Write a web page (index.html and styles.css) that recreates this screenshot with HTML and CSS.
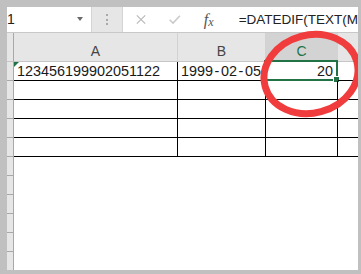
FILE: index.html
```html
<!DOCTYPE html>
<html lang="en">
<head>
    <meta charset="UTF-8">
    <meta name="viewport" content="width=device-width, initial-scale=1.0">
    <title>Sheet</title>
    <link rel="stylesheet" href="styles.css">
</head>
<body>
    <div class="win">
      <div class="fbar">
        <div class="namebox"><span class="name">1</span><span class="caret"></span></div>
        <div class="grip"><i></i><i></i><i></i></div>
        <div class="fbox">
          <svg class="cancel" width="12" height="11" viewBox="0 0 12 11"><path d="M1 0.5 L11 10.5 M11 0.5 L1 10.5" stroke="#b9b9b9" stroke-width="1.4" fill="none"/></svg>
          <svg class="enter" width="14" height="11" viewBox="0 0 14 11"><path d="M0.8 5.8 L4.8 9.8 L13 1" stroke="#c9c9c9" stroke-width="1.8" fill="none"/></svg>
          <span class="fx">f<span class="sub">x</span></span>
          <span class="formula">=DATEDIF(TEXT(M</span>
        </div>
      </div>

      <div class="sheet">
        <!-- column headers -->
        <div class="hd corner"></div>
        <div class="hd">A</div>
        <div class="hd">B</div>
        <div class="hd sel">C</div>
        <div class="hd last"></div>

        <!-- row 1 -->
        <div class="rh"></div>
        <div class="c txt"><span class="err"></span>123456199902051122</div>
        <div class="c num">1999<span class="dash">-</span>02<span class="dash">-</span>05</div>
        <div class="c num active">20<span class="box"><span class="handle"></span></span></div>
        <div class="c end"></div>

        <!-- rows 2-5 -->
        <div class="rh"></div><div class="c"></div><div class="c"></div><div class="c"></div><div class="c end"></div>
        <div class="rh"></div><div class="c"></div><div class="c"></div><div class="c"></div><div class="c end"></div>
        <div class="rh"></div><div class="c"></div><div class="c"></div><div class="c"></div><div class="c end"></div>
        <div class="rh"></div><div class="c"></div><div class="c"></div><div class="c"></div><div class="c end"></div>

        <!-- empty rows, no borders -->
        <div class="rh"></div><div class="blank"></div>
        <div class="rh"></div><div class="blank"></div>
        <div class="rh"></div><div class="blank"></div>
        <div class="rh"></div><div class="blank"></div>
        <div class="rh"></div><div class="blank"></div>
        <div class="rh bottom"></div><div class="blank"></div>
      </div>

      <svg class="ring" width="351" height="263" viewBox="0 0 351 263">
        <ellipse cx="304" cy="67" rx="47.5" ry="39" transform="rotate(-15 304 67)" fill="none" stroke="#f03c3c" stroke-width="7"/>
      </svg>
    </div>
</body>
</html>
```

FILE: styles.css
```css
body{
    margin:0;
    background:#c0c0c0;
    font-family:"Liberation Sans", Arial, sans-serif;
}
.win{
    position:relative;
    width:351px;
    height:263px;
    margin:7px 0 0 7px;
    background:white;
    overflow:hidden;
}

/* formula bar */
.fbar{
    display:flex;
    height:25px;
    background:#e6e6e6;
    border-bottom:1px solid #c8c8c8;
}
.namebox{
    position:relative;
    width:84px;
    background:white;
    border-right:1px solid #d4d4d4;
    font-size:14px;
    line-height:25px;
    color:#222;
}
.caret{
    position:absolute;
    left:70px;
    top:10px;
    border-left:3px solid transparent;
    border-right:3px solid transparent;
    border-top:4px solid #6a6a6a;
}
.grip{
    width:30px;
    display:flex;
    flex-direction:column;
    align-items:center;
    justify-content:center;
    gap:2.5px;
}
.grip i{
    width:2px;
    height:2px;
    background:#a9a9a9;
}
.fbox{
    flex:1;
    display:flex;
    align-items:center;
    background:white;
    border-left:1px solid #d4d4d4;
    white-space:nowrap;
    overflow:hidden;
}
.cancel{ margin-left:13px; }
.enter{ margin-left:23px; }
.fx{
    margin-left:23px;
    font-family:"Liberation Serif", serif;
    font-style:italic;
    font-size:16px;
    color:#555;
}
.fx .sub{
    font-size:12px;
    position:relative;
    top:1px;
}
.formula{
    margin-left:25px;
    font-size:13.5px;
    color:#222;
}

/* grid */
.sheet{
    display:grid;
    grid-template-columns:7px 164px 88px 72px 20px;
    grid-template-rows:29px repeat(10, 19px) 18px;
}
.hd{
    background:#e6e6e6;
    border-bottom:1px solid #c6c6c6;
    border-right:1px solid #d2d2d2;
    display:flex;
    align-items:flex-end;
    justify-content:center;
    padding-bottom:2px;
    font-size:14px;
    color:#444;
    box-sizing:border-box;
}
.hd.corner{
    border-right:1px solid #a8a8a8;
}
.hd.sel{
    background:#d3d3d3;
    color:#217346;
}
.hd.last{ border-right:none; }
.rh{
    background:#e6e6e6;
    border-right:1px solid #a8a8a8;
    border-bottom:1px solid #a8a8a8;
    box-sizing:border-box;
}
.rh.bottom{ border-bottom:none; }
.c{
    position:relative;
    border-right:1px solid #000;
    border-bottom:1px solid #000;
    box-sizing:border-box;
    font-size:14.4px;
    line-height:18px;
    color:#1a1a1a;
    white-space:nowrap;
}
.c.end{ border-right:none; }
.txt{ padding-left:3px; }
.num{
    text-align:right;
    padding-right:4px;
}
.dash{ margin:0 1.6px; }
.blank{ grid-column:span 4; }
.err{
    position:absolute;
    left:0;
    top:0;
    border-top:5px solid #217346;
    border-right:5px solid transparent;
}
.box{
    position:absolute;
    left:-2px;
    top:-2px;
    width:74px;
    height:21px;
    border:2px solid #217346;
    box-sizing:border-box;
}
.handle{
    position:absolute;
    right:-4px;
    bottom:-4px;
    width:5px;
    height:5px;
    background:#217346;
    border:1px solid white;
}

.ring{
    position:absolute;
    left:0;
    top:0;
}
```
